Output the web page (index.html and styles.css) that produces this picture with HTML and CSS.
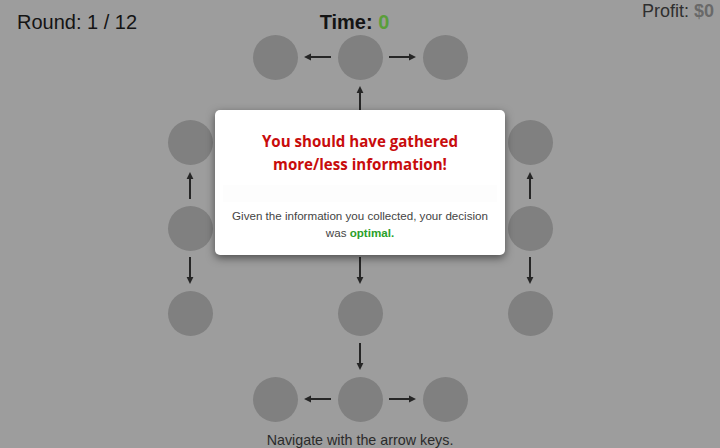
FILE: index.html
```html
<!DOCTYPE html>
<html>
<head>
<meta charset="utf-8">
<link rel="stylesheet" href="styles.css">
</head>
<body>
<div class="page">
  <header class="topbar">
    <div class="round">Round: 1 / 12</div>
    <div class="time">Time: <span class="time-val">0</span></div>
    <div class="profit">Profit: <span class="profit-val">$0</span></div>
  </header>

  <div class="board">
    <!-- row 0 -->
    <div></div><div></div>
    <div class="node"></div>
    <div class="gap"><svg class="ah" width="27" height="8" viewBox="0 0 27 8"><line x1="6" y1="4" x2="27" y2="4"/><polygon points="0,4 7,0.6 7,7.4"/></svg></div>
    <div class="node"></div>
    <div class="gap"><svg class="ah" width="27" height="8" viewBox="0 0 27 8"><line x1="0" y1="4" x2="21" y2="4"/><polygon points="27,4 20,0.6 20,7.4"/></svg></div>
    <div class="node"></div>
    <div></div><div></div>

    <!-- gap row 0-1 -->
    <div></div><div></div><div></div><div></div>
    <div class="gap"><svg class="av" width="8" height="27" viewBox="0 0 8 27"><line x1="4" y1="6" x2="4" y2="27"/><polygon points="4,0 0.6,7 7.4,7"/></svg></div>
    <div></div><div></div><div></div><div></div>

    <!-- row 1 -->
    <div class="node"></div><div></div><div></div><div></div>
    <div class="node"></div>
    <div></div><div></div><div></div>
    <div class="node"></div>

    <!-- gap row 1-2 -->
    <div class="gap"><svg class="av" width="8" height="27" viewBox="0 0 8 27"><line x1="4" y1="6" x2="4" y2="27"/><polygon points="4,0 0.6,7 7.4,7"/></svg></div>
    <div></div><div></div><div></div>
    <div class="gap"><svg class="av" width="8" height="27" viewBox="0 0 8 27"><line x1="4" y1="6" x2="4" y2="27"/><polygon points="4,0 0.6,7 7.4,7"/></svg></div>
    <div></div><div></div><div></div>
    <div class="gap"><svg class="av" width="8" height="27" viewBox="0 0 8 27"><line x1="4" y1="6" x2="4" y2="27"/><polygon points="4,0 0.6,7 7.4,7"/></svg></div>

    <!-- row 2 -->
    <div class="node"></div>
    <div class="gap"><svg class="ah" width="27" height="8" viewBox="0 0 27 8"><line x1="6" y1="4" x2="27" y2="4"/><polygon points="0,4 7,0.6 7,7.4"/></svg></div>
    <div class="node"></div>
    <div class="gap"><svg class="ah" width="27" height="8" viewBox="0 0 27 8"><line x1="6" y1="4" x2="27" y2="4"/><polygon points="0,4 7,0.6 7,7.4"/></svg></div>
    <div class="node"></div>
    <div class="gap"><svg class="ah" width="27" height="8" viewBox="0 0 27 8"><line x1="0" y1="4" x2="21" y2="4"/><polygon points="27,4 20,0.6 20,7.4"/></svg></div>
    <div class="node"></div>
    <div class="gap"><svg class="ah" width="27" height="8" viewBox="0 0 27 8"><line x1="0" y1="4" x2="21" y2="4"/><polygon points="27,4 20,0.6 20,7.4"/></svg></div>
    <div class="node"></div>

    <!-- gap row 2-3 -->
    <div class="gap"><svg class="av" width="8" height="27" viewBox="0 0 8 27"><line x1="4" y1="0" x2="4" y2="21"/><polygon points="4,27 0.6,20 7.4,20"/></svg></div>
    <div></div><div></div><div></div>
    <div class="gap"><svg class="av" width="8" height="27" viewBox="0 0 8 27"><line x1="4" y1="0" x2="4" y2="21"/><polygon points="4,27 0.6,20 7.4,20"/></svg></div>
    <div></div><div></div><div></div>
    <div class="gap"><svg class="av" width="8" height="27" viewBox="0 0 8 27"><line x1="4" y1="0" x2="4" y2="21"/><polygon points="4,27 0.6,20 7.4,20"/></svg></div>

    <!-- row 3 -->
    <div class="node"></div><div></div><div></div><div></div>
    <div class="node"></div>
    <div></div><div></div><div></div>
    <div class="node"></div>

    <!-- gap row 3-4 -->
    <div></div><div></div><div></div><div></div>
    <div class="gap"><svg class="av" width="8" height="27" viewBox="0 0 8 27"><line x1="4" y1="0" x2="4" y2="21"/><polygon points="4,27 0.6,20 7.4,20"/></svg></div>
    <div></div><div></div><div></div><div></div>

    <!-- row 4 -->
    <div></div><div></div>
    <div class="node"></div>
    <div class="gap"><svg class="ah" width="27" height="8" viewBox="0 0 27 8"><line x1="6" y1="4" x2="27" y2="4"/><polygon points="0,4 7,0.6 7,7.4"/></svg></div>
    <div class="node"></div>
    <div class="gap"><svg class="ah" width="27" height="8" viewBox="0 0 27 8"><line x1="0" y1="4" x2="21" y2="4"/><polygon points="27,4 20,0.6 20,7.4"/></svg></div>
    <div class="node"></div>
    <div></div><div></div>
  </div>

  <p class="hint">Navigate with the arrow keys.</p>

  <div class="overlay">
    <div class="modal">
      <h2 class="modal-title">You should have gathered<br>more/less information!</h2>
      <div class="modal-spacer"></div>
      <p class="modal-body">Given the information you collected, your decision was <b class="optimal">optimal.</b></p>
    </div>
  </div>
</div>
</body>
</html>
```

FILE: styles.css
```css
* { box-sizing: border-box; }
html, body {
  margin: 0;
  padding: 0;
  background: #9d9d9d;
}
body {
  font-family: "Liberation Sans", Arial, sans-serif;
  color: #131313;
}
.page {
  position: relative;
  width: 720px;
  height: 448px;
  overflow: hidden;
}
.topbar {
  display: grid;
  grid-template-columns: 1fr auto 1fr;
  align-items: start;
  height: 34.5px;
}
.round {
  font-size: 20px;
  line-height: 23px;
  margin-top: 10.5px;
  padding-left: 17px;
  color: #141414;
}
.time {
  font-size: 20px;
  line-height: 23px;
  margin-top: 10.5px;
  font-weight: bold;
  color: #141414;
  margin-right: 11px;
}
.time-val { color: #5a9e3a; }
.profit {
  justify-self: end;
  font-size: 18px;
  line-height: 21px;
  margin-top: 1.3px;
  padding-right: 6px;
  color: #2f2f2f;
}
.profit-val { font-weight: bold; color: #696969; }

.board {
  display: grid;
  grid-template-columns: 45px 40px 45px 40px 45px 40px 45px 40px 45px;
  grid-template-rows: 45px 40.5px 45px 40.5px 45px 40.5px 45px 40.5px 45px;
  margin-left: 167.5px;
  width: 385px;
}
.node {
  width: 45px;
  height: 45px;
  border-radius: 50%;
  background: #808080;
}
.gap {
  display: flex;
  align-items: center;
  justify-content: center;
}
.gap svg { display: block; }
.gap line { stroke: #262626; stroke-width: 2; }
.gap polygon { fill: #262626; }

.hint {
  margin: 10.5px 0 0;
  text-align: center;
  font-size: 14.3px;
  line-height: 16px;
  color: #2b2b2b;
}

.overlay {
  position: absolute;
  inset: 0;
  display: flex;
  justify-content: center;
  align-items: flex-start;
  padding-top: 110px;
}
.modal {
  width: 290px;
  height: 145px;
  background: #fff;
  border-radius: 5px;
  box-shadow: 0 3px 9px rgba(0, 0, 0, 0.5);
  padding: 19.5px 15px 0;
  text-align: center;
}
.modal-title {
  margin: 0;
  font-family: "Open Sans", sans-serif;
  font-weight: bold;
  font-size: 15.1px;
  line-height: 23px;
  color: #c80c0c;
}
.modal-spacer {
  height: 17px;
  margin: 9.5px -7px 4.5px;
  background: #fdfdfd;
}
.modal-body {
  margin: 0;
  font-size: 11.6px;
  line-height: 17px;
  color: #444;
}
.optimal { font-weight: bold; color: #2aa02a; }
```
